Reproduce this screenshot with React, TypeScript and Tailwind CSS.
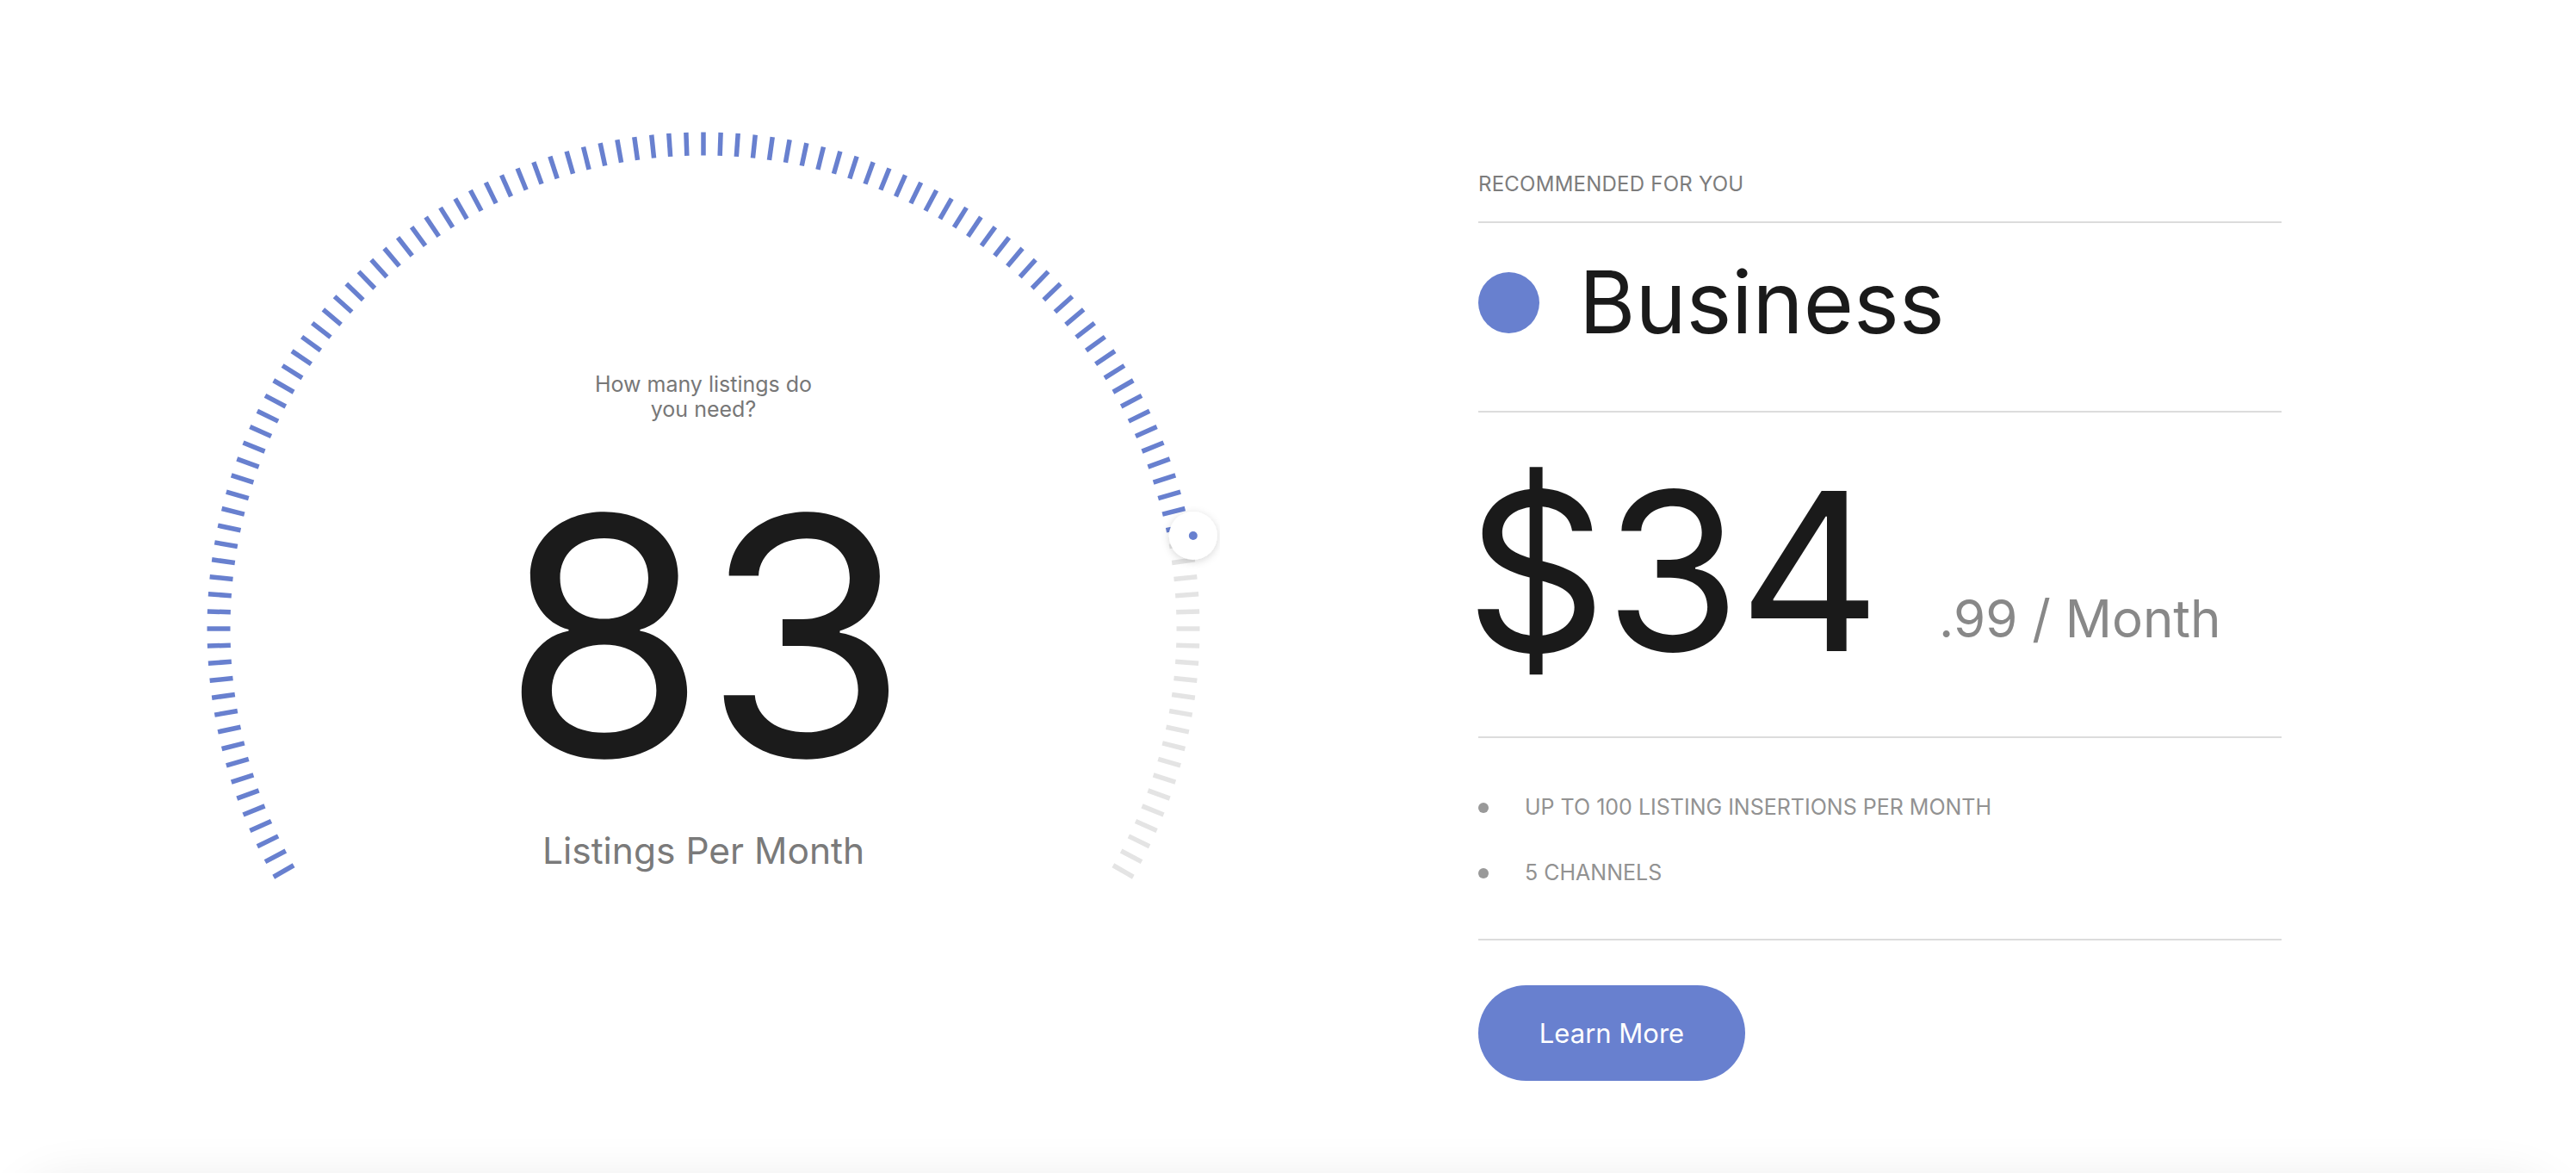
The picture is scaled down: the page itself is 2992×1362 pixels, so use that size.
import React from "react";

const BLUE = "#6880cf";

function Gauge() {
  const cx = 600;
  const cy = 600;
  const rMid = 563;
  const len = 27;
  const knobAngle = 79.25;
  const ticks: { a: number; blue: boolean }[] = [];
  for (let a = -120; a <= 120; a += 2) {
    ticks.push({ a, blue: a < knobAngle });
  }
  const rad = (d: number) => (d * Math.PI) / 180;
  const kx = cx + 579 * Math.sin(rad(knobAngle));
  const ky = cy - 579 * Math.cos(rad(knobAngle));
  return (
    <svg className="absolute inset-0" width={1200} height={1000} viewBox="0 0 1200 1000">
      <defs>
        <filter id="ks" x="-50%" y="-50%" width="200%" height="200%">
          <feDropShadow dx="0" dy="2" stdDeviation="5" floodColor="#000" floodOpacity="0.16" />
        </filter>
      </defs>
      {ticks.map((t) => {
        const s = Math.sin(rad(t.a));
        const c = Math.cos(rad(t.a));
        const r1 = rMid - len / 2;
        const r2 = rMid + len / 2;
        return (
          <line
            key={t.a}
            x1={cx + r1 * s}
            y1={cy - r1 * c}
            x2={cx + r2 * s}
            y2={cy - r2 * c}
            stroke={t.blue ? BLUE : "#e4e4e4"}
            strokeWidth={5.5}
          />
        );
      })}
      <circle cx={kx} cy={ky} r={28} fill="#fff" filter="url(#ks)" />
      <circle cx={kx} cy={ky} r={5} fill={BLUE} />
    </svg>
  );
}

export default function App() {
  return (
    <div className="w-full bg-white overflow-hidden font-['Inter',sans-serif] text-[#1a1a1a]">
      <div className="h-[1372px] flex pl-[217px] pt-[130px]">
        <div className="relative w-[1200px] h-[1000px] shrink-0">
          <Gauge />
          <div className="relative flex flex-col items-center pt-[302px]">
            <p className="w-[280px] text-center text-[25px] leading-[29px] text-[#777777]">
              How many listings do you need?
            </p>
            <div className="mt-[104px] text-[385px] leading-[0.75] tracking-[-0.01em] text-[#1b1b1b]">83</div>
            <div className="mt-[84px] text-[42.5px] leading-none text-[#7a7a7a]">Listings Per Month</div>
          </div>
        </div>
        <div className="ml-[300px] w-[933px] flex flex-col pt-[72px]">
          <div className="text-[24px] leading-none tracking-[0.01em] text-[#7c7c7c]">RECOMMENDED FOR YOU</div>
          <div className="mt-[31px] h-[2px] bg-[#dcdcdc]" />
          <div className="mt-[42px] flex items-center">
            <div className="w-[71px] h-[71px] rounded-full bg-[#6880cf]" />
            <div className="ml-[46px] text-[100px] leading-none">Business</div>
          </div>
          <div className="mt-[76px] h-[2px] bg-[#dcdcdc]" />
          <div className="mt-[56px] flex items-start">
            <div className="text-[256px] leading-none -ml-[15px] tracking-[-0.01em]">$34</div>
            <div className="ml-[70px] mt-[153px] text-[60px] leading-none text-[#888888]">.99 / Month</div>
          </div>
          <div className="mt-[64px] h-[2px] bg-[#dcdcdc]" />
          <ul className="mt-[68px] flex flex-col gap-[51px]">
            <li className="flex items-center">
              <span className="w-[12px] h-[12px] rounded-full bg-[#999999]" />
              <span className="ml-[42px] text-[25px] leading-none text-[#929292]">
                UP TO 100 LISTING INSERTIONS PER MONTH
              </span>
            </li>
            <li className="flex items-center">
              <span className="w-[12px] h-[12px] rounded-full bg-[#999999]" />
              <span className="ml-[42px] text-[25px] leading-none text-[#929292]">5 CHANNELS</span>
            </li>
          </ul>
          <div className="mt-[64px] h-[2px] bg-[#dcdcdc]" />
          <button className="mt-[52px] w-[310px] h-[111px] rounded-full bg-[#6880cf] text-white text-[31px] leading-none">
            Learn More
          </button>
        </div>
      </div>
      <div className="mx-[20px] h-[400px] rounded-[60px] bg-white shadow-[0_0_60px_rgba(0,0,0,0.09)]" />
    </div>
  );
}
